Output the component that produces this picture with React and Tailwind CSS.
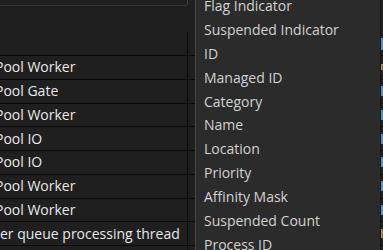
import React from "react";

const rows = [
  { text: "Pool Worker", cut: true, icon: "brown-small" },
  { text: "Pool Gate", cut: true, icon: "blue" },
  { text: "Pool Worker", cut: true, icon: "blue" },
  { text: "Pool IO", cut: true, icon: "blue" },
  { text: "Pool IO", cut: true, icon: "blue" },
  { text: "Pool Worker", cut: true, icon: "blue" },
  { text: "Pool Worker", cut: true, icon: "blue" },
  { text: "er queue processing thread", cut: false, icon: "brown" },
  { text: "", cut: false, icon: "none" },
];

const menu = [
  "Flag Indicator",
  "Suspended Indicator",
  "ID",
  "Managed ID",
  "Category",
  "Name",
  "Location",
  "Priority",
  "Affinity Mask",
  "Suspended Count",
  "Process ID",
];

function Icon({ kind }) {
  if (kind === "blue") return <div className="w-[2px] h-[10px] bg-[#4a95d0]" />;
  if (kind === "brown") return <div className="w-[2px] h-[9px] bg-[#8b6b3f] border-l border-[#b49a6a]" />;
  if (kind === "brown-small") return <div className="w-[2px] h-[6px] bg-[#8b6b3f] border-l border-[#b49a6a]" />;
  return null;
}

function CellText({ text, cut }) {
  if (cut) {
    return (
      <span className="relative left-[-5px] shrink-0 whitespace-nowrap text-[14px] leading-none text-[#e8e8e8]">
        {text}
      </span>
    );
  }
  return (
    <span className="shrink-0 whitespace-nowrap text-[14px] leading-none text-[#e8e8e8]">
      {text}
    </span>
  );
}

export default function App() {
  return (
    <div
      className="relative w-[383px] h-[250px] overflow-hidden bg-[#1f1f1f] flex flex-col"
      style={{ fontFamily: '"Open Sans", sans-serif' }}
    >
      <div className="flex h-[6px] shrink-0">
        <div className="w-[187px] h-[6px] border-b border-[#343434]" />
        <div className="w-px h-[5px] bg-[#3c3c3c]" />
      </div>
      <div className="h-[26px] shrink-0" />
      <div className="flex h-[24px] shrink-0 border-b border-[#0a0a0a] box-border">
        <div className="w-[188px] border-r border-[#0a0a0a]" />
        <div className="w-[193px]" />
        <div className="flex items-center">
          <div className="w-[2px] h-[12px] bg-[#4a95d0]" />
        </div>
      </div>
      {rows.map((r, i) => (
        <div
          key={i}
          className="flex h-[23.75px] shrink-0 border-b border-[#0a0a0a] box-border"
        >
          <div className="w-[188px] shrink-0 border-r border-[#0a0a0a] overflow-hidden flex items-center">
            <CellText text={r.text} cut={r.cut} />
          </div>
          <div className="w-[193px] shrink-0" />
          <div className="flex items-center">
            <Icon kind={r.icon} />
          </div>
        </div>
      ))}

      <div className="absolute left-[195px] top-0 bottom-0 w-[186px] bg-[#2b2b2b] border-l border-[#454545] border-r border-r-[#161616]">
        <div className="flex flex-col mt-[-6px]">
          {menu.map((m) => (
            <div
              key={m}
              className="h-[23.9px] shrink-0 flex items-center pl-[8px] text-[14px] leading-none text-[#d2d2d2] whitespace-nowrap"
            >
              {m}
            </div>
          ))}
        </div>
      </div>
    </div>
  );
}
